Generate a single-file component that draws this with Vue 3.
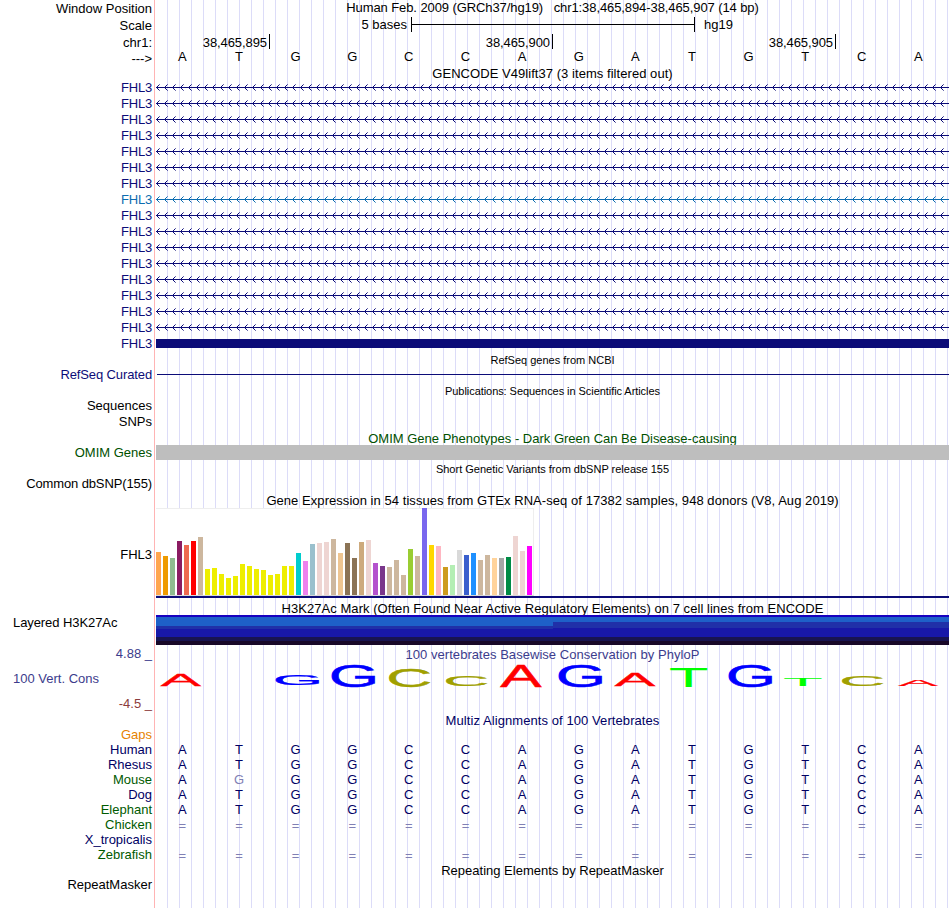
<template>
  <div class="browser">
    <div class="row h16">
      <div class="label low">Window Position</div>
      <div class="track title position">Human Feb. 2009 (GRCh37/hg19) &nbsp; chr1:38,465,894-38,465,907 (14 bp)</div>
    </div>
    <div class="row h18">
      <div class="label low">Scale</div>
      <div class="track scale">
        <span class="scale-left">5 bases</span>
        <span class="scale-bar"></span>
        <span>hg19</span>
      </div>
    </div>
    <div class="row h15">
      <div class="label low">chr1:</div>
      <div class="track ticks">
        <span v-for="tick in ticks" :key="tick" class="tick">{{ tick }}</span>
      </div>
    </div>
    <div class="row h17">
      <div class="label low">---&gt;</div>
      <div class="track bases ruler">
        <span v-for="(base, i) in sequence" :key="i">{{ base }}</span>
      </div>
    </div>

    <div class="row h14">
      <div class="track title gencode low">GENCODE V49lift37 (3 items filtered out)</div>
    </div>
    <div v-for="n in 16" :key="n" class="row h16" :class="n === 8 ? 'alt' : 'navy'">
      <div class="label gene">FHL3</div>
      <div class="track">
        <svg class="intron" width="793" height="16" shape-rendering="crispEdges">
          <rect x="0" y="7" width="793" height="1" fill="currentColor" />
          <g v-for="k in 99" :key="k" :transform="`translate(${(k - 1) * 8} 0)`" fill="currentColor">
            <rect x="1" y="6" width="1" height="3" />
            <rect x="2" y="5" width="1" height="1" />
            <rect x="2" y="9" width="1" height="1" />
            <rect x="3" y="4" width="1" height="1" opacity=".6" />
            <rect x="3" y="10" width="1" height="1" opacity=".6" />
          </g>
        </svg>
      </div>
    </div>
    <div class="row h16 navy">
      <div class="label gene">FHL3</div>
      <div class="track"><div class="exon"></div></div>
    </div>

    <div class="row h15">
      <div class="track title small">RefSeq genes from NCBI</div>
    </div>
    <div class="row h16 navy">
      <div class="label tight">RefSeq Curated</div>
      <div class="track"><div class="thin-line"></div></div>
    </div>
    <div class="row h15">
      <div class="track title small publications">Publications: Sequences in Scientific Articles</div>
    </div>
    <div class="row h16"><div class="label">Sequences</div></div>
    <div class="row h16"><div class="label">SNPs</div></div>
    <div class="row h15 omim">
      <div class="track title low">OMIM Gene Phenotypes - Dark Green Can Be Disease-causing</div>
    </div>
    <div class="row h15 omim">
      <div class="label">OMIM Genes</div>
      <div class="track gray"></div>
    </div>
    <div class="row h16">
      <div class="track title small dbsnp">Short Genetic Variants from dbSNP release 155</div>
    </div>
    <div class="row h16"><div class="label tight">Common dbSNP(155)</div></div>

    <div class="row h16">
      <div class="track title gtex-title low">Gene Expression in 54 tissues from GTEx RNA-seq of 17382 samples, 948 donors (V8, Aug 2019)</div>
    </div>
    <div class="row gtex">
      <div class="label">FHL3</div>
      <div class="track gtex-track">
        <div class="chart">
          <div
            v-for="(bar, i) in tissues"
            :key="i"
            class="bar"
            :style="{ height: bar[0] + 'px', background: bar[1] }"
          ></div>
        </div>
      </div>
    </div>

    <div class="row h17">
      <div class="track title h3k-title">H3K27Ac Mark (Often Found Near Active Regulatory Elements) on 7 cell lines from ENCODE</div>
    </div>
    <div class="row h30">
      <div class="label side">Layered H3K27Ac</div>
      <div class="track bands">
        <div class="band left-part"></div>
        <div class="band right-part"></div>
      </div>
    </div>

    <div class="row phylop">
      <div class="label phylop-label">
        <div class="max">4.88 _</div>
        <div class="name">100 Vert. Cons</div>
        <div class="min">-4.5 _</div>
      </div>
      <div class="track phylop-track">
        <div class="title phylop-title">100 vertebrates Basewise Conservation by PhyloP</div>
        <svg class="logo" width="793" height="30">
          <text
            v-for="(l, i) in logo"
            :key="i"
            :fill="glyphs[l[0]].color"
            :stroke="glyphs[l[0]].color"
            :stroke-width="l[0] === 'T' ? 0 : 1.5"
            :transform="logoTransform(l)"
            font-size="100"
          >{{ l[0] }}</text>
        </svg>
      </div>
    </div>

    <div class="row h14 species">
      <div class="track title multiz low">Multiz Alignments of 100 Vertebrates</div>
    </div>
    <div v-for="s in species" :key="s.name" class="row h15 species">
      <div class="label" :class="s.tone">{{ s.name }}</div>
      <div class="track bases">
        <span v-for="(base, i) in s.bases" :key="i" :class="{ faded: base === '=' || (s.name === 'Mouse' && i === 1), eq: base === '=' }">{{ base }}</span>
      </div>
    </div>
    <div class="row h15">
      <div class="track title low">Repeating Elements by RepeatMasker</div>
    </div>
    <div class="row h15"><div class="label">RepeatMasker</div></div>
  </div>
</template>

<script setup>
const sequence = 'ATGGCCAGATGTCA'
const ticks = ['38,465,895', '38,465,900', '38,465,905']

const species = [
  { name: 'Gaps', tone: 'orange', bases: '' },
  { name: 'Human', tone: 'blue', bases: sequence },
  { name: 'Rhesus', tone: 'blue', bases: sequence },
  { name: 'Mouse', tone: 'green', bases: 'AGGGCCAGATGTCA' },
  { name: 'Dog', tone: 'blue', bases: sequence },
  { name: 'Elephant', tone: 'green', bases: sequence },
  { name: 'Chicken', tone: 'green', bases: '==============' },
  { name: 'X_tropicalis', tone: 'blue', bases: '' },
  { name: 'Zebrafish', tone: 'green', bases: '==============' },
]

// bar height and tissue colour
const tissues = [
  [43, '#ffa54f'], [39, '#ee9a00'], [37, '#8fbc8f'], [54, '#8b1c62'], [50, '#ee6a50'], [54, '#ff0000'],
  [58, '#cdb79e'], [26, '#eeee00'], [27, '#eeee00'], [21, '#eeee00'], [17, '#eeee00'], [19, '#eeee00'],
  [31, '#eeee00'], [29, '#eeee00'], [26, '#eeee00'], [25, '#eeee00'], [20, '#eeee00'], [21, '#eeee00'],
  [29, '#eeee00'], [29, '#eeee00'], [42, '#00cdcd'], [34, '#ee82ee'], [51, '#9ac0cd'], [52, '#eed5d2'],
  [53, '#eed5d2'], [56, '#cdb79e'], [42, '#eec591'], [52, '#8b7355'], [37, '#8b7355'], [53, '#cdaa7d'],
  [55, '#eed5d2'], [32, '#b452cd'], [29, '#7a378b'], [28, '#cdb79e'], [35, '#cdb79e'], [20, '#cdb79e'],
  [46, '#9acd32'], [39, '#cdb79e'], [87, '#7a67ee'], [50, '#ffd700'], [49, '#ffb6c1'], [28, '#cd9b1d'],
  [30, '#b4eeb4'], [45, '#d9d9d9'], [40, '#3a5fcd'], [42, '#1e90ff'], [35, '#cdb79e'], [40, '#cdb79e'],
  [37, '#ffd39b'], [37, '#a6a6a6'], [38, '#008b45'], [59, '#eed5d2'], [44, '#eed5d2'], [49, '#ff00ff'],
]

// ink extents of each letter at font-size 100
const glyphs = {
  A: { color: '#ff0000', x0: 0.2, x1: 66.5, top: 68.8, bottom: 0 },
  C: { color: '#a0a000', x0: 4.5, x1: 69, top: 70.2, bottom: -1.4 },
  G: { color: '#0000ff', x0: 4.5, x1: 71.7, top: 70.2, bottom: -1.4 },
  T: { color: '#00ff00', x0: 2.2, x1: 58.9, top: 68.8, bottom: 0 },
}

// letter, left, right, top, bottom
const logo = [
  ['A', 4.7, 45, 12, 23.7],
  ['G', 119.7, 163.3, 13, 23.7],
  ['G', 175.7, 219.3, 2, 25],
  ['C', 233, 274, 7, 25],
  ['C', 290, 331, 13, 24],
  ['A', 344.3, 385.3, 4, 25],
  ['G', 402.7, 446.3, 2, 25],
  ['A', 458.7, 499.3, 11, 23.7],
  ['T', 514.3, 551.3, 6, 25],
  ['G', 572.7, 616.3, 2, 25],
  ['T', 628.3, 665.7, 17, 24],
  ['C', 686, 727, 13, 24],
  ['A', 742.3, 781.7, 18, 23.7],
]

function logoTransform([ch, left, right, top, bottom]) {
  const g = glyphs[ch]
  const sx = (right - left) / (g.x1 - g.x0)
  const sy = (bottom - top) / (g.top - g.bottom)
  return `matrix(${sx} 0 0 ${sy} ${left - g.x0 * sx} ${bottom + g.bottom * sy})`
}
</script>

<style>
body {
  margin: 0;
  background: #fff;
}
</style>

<style scoped>
.browser {
  width: 949px;
  height: 908px;
  overflow: hidden;
  font-family: "Liberation Sans", Arial, sans-serif;
  font-size: 13px;
  color: #000;
  background:
    linear-gradient(#ffb4b4, #ffb4b4) 154px 0 / 1px 100% no-repeat,
    repeating-linear-gradient(to right, transparent 0 11px, #dcdcf8 11px 12px) 156px 0 / 793px 100% no-repeat;
}
.row {
  display: grid;
  grid-template-columns: 152px 793px;
  grid-template-rows: 100%;
  column-gap: 4px;
  white-space: nowrap;
}
.h14 { height: 14px; line-height: 14px; }
.h15 { height: 15px; line-height: 15px; }
.h16 { height: 16px; line-height: 16px; }
.h17 { height: 17px; line-height: 17px; }
.h18 { height: 18px; line-height: 18px; }
.h30 { height: 30px; line-height: 16px; }
.label {
  grid-column: 1;
  text-align: right;
}
.gene {
  letter-spacing: -0.2px;
}
.tight {
  letter-spacing: -0.12px;
}
.track {
  grid-column: 2;
  min-width: 0;
}
.title {
  text-align: center;
}
.low {
  padding-top: 1px;
}
.position {
  letter-spacing: -0.09px;
}
.gencode {
  letter-spacing: 0.05px;
}
.small {
  font-size: 11px;
  line-height: 17px;
}
.publications {
  letter-spacing: -0.06px;
}
.dbsnp {
  line-height: 19px;
}
.gtex-title {
  letter-spacing: 0.055px;
}
.h3k-title {
  padding-top: 2px;
  letter-spacing: 0.05px;
}
.multiz {
  letter-spacing: 0.08px;
}
.navy { color: #0c0c78; }
.alt { color: #0c6cb0; }
.omim { color: #005000; }
.scale {
  display: flex;
}
.scale-left {
  width: 251px;
  text-align: right;
}
.scale-bar {
  box-sizing: border-box;
  width: 284px;
  height: 15px;
  margin: 1px 9px 0 4px;
  border: solid #000;
  border-width: 0 1px;
  background: linear-gradient(#000, #000) 0 7px / 100% 1px no-repeat;
}
.ticks {
  display: flex;
  gap: 169px;
  line-height: 17px;
}
.tick {
  box-sizing: border-box;
  width: 114px;
  padding-right: 2px;
  border-right: 1px solid #000;
  text-align: right;
  letter-spacing: -0.08px;
}
.bases {
  display: grid;
  grid-template-columns: repeat(14, 56.64px);
  margin-left: -2px;
  text-align: center;
}
.ruler {
  line-height: 15px;
}
.intron,
.logo {
  display: block;
}
.logo {
  overflow: visible;
}
.exon {
  height: 9px;
  margin-top: 3px;
  background: #0c0c78;
}
.thin-line {
  height: 1px;
  margin: 7px 0 0 1px;
  background: #0c0c78;
}
/* painted above the title, whose descenders run into the track */
.gray,
.bands {
  position: relative;
}
.gray {
  background: #bebebe;
}
.gtex {
  height: 90px;
  line-height: 93px;
}
.gtex-track {
  box-sizing: border-box;
  border-bottom: 2px solid #0c0c78;
}
.chart {
  box-sizing: border-box;
  display: flex;
  align-items: flex-end;
  gap: 2px;
  width: 378px;
  height: 88px;
  border: 1px solid #eee;
  border-left: 0;
  border-bottom-color: #d8d8d8;
  background: #fff;
}
.bar {
  flex: none;
  width: 5px;
}
.label.side {
  text-align: left;
  padding-left: 13px;
  letter-spacing: -0.08px;
}
.bands {
  display: grid;
  grid-template-columns: 397px 396px;
}
.left-part {
  background: linear-gradient(#1800c0 2px, #1e60c8 2px 11px, #2030a8 11px 14px, #1818a8 14px 22px, #181450 22px 26px, #180828 26px);
}
.right-part {
  background: linear-gradient(#1800c0 2px, #1e60c8 2px 7px, #2030a8 7px 13px, #1818a8 13px 22px, #181450 22px 26px, #180828 26px);
}
.phylop {
  height: 68px;
  color: #3c3c8c;
}
.phylop-label {
  display: grid;
  grid-template-rows: 18px 32px 18px;
  line-height: 18px;
}
.name {
  text-align: left;
  padding-left: 13px;
  line-height: 32px;
}
.min {
  color: #8c3c3c;
}
.phylop-title {
  height: 17px;
  line-height: 20px;
  letter-spacing: 0.04px;
}
.species { color: #000064; }
.orange { color: #e68200; }
.blue { color: #000064; }
.green { color: #005a00; }
.faded { color: #8080b4; }
.eq { line-height: 18px; }
</style>
